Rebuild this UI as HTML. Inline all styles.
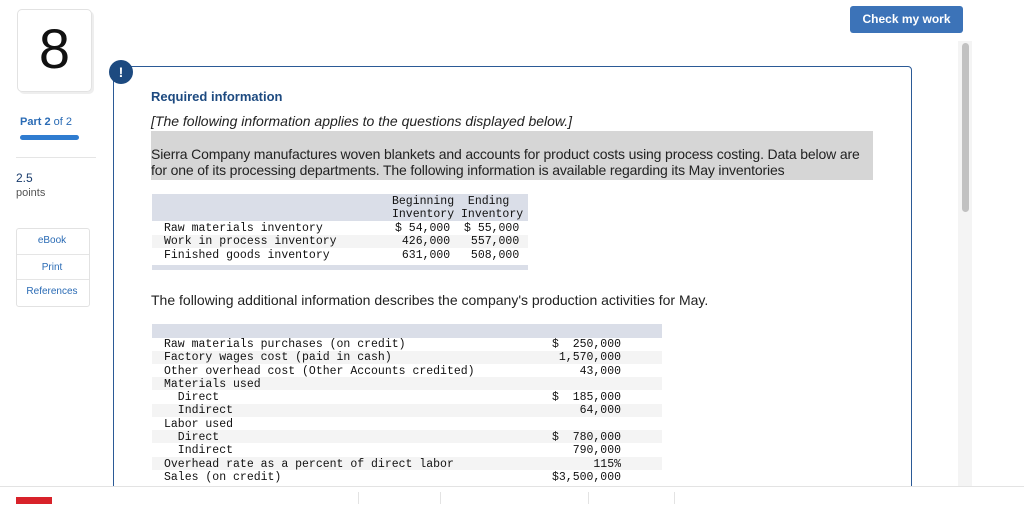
<!DOCTYPE html>
<html><head><style>
body{margin:0;width:1024px;height:504px;background:#fff;position:relative;overflow:hidden;font-family:"Liberation Sans",sans-serif;color:#222}
.a{position:absolute}
.mono{font-family:"Liberation Mono",monospace;font-size:11.5px;white-space:pre;line-height:13.3px;color:#111}
.side{color:#2a6bb5;font-size:10px;text-align:center;width:72px;left:16px}
</style></head><body>
<div class="a" style="left:17px;top:9px;width:73px;height:81px;border:1px solid #e2e2e2;border-radius:5px;box-shadow:2px 2px 0 #eee"></div>
<div class="a" style="left:17px;top:14px;width:75px;text-align:center;font-size:56px;line-height:70px;color:#111">8</div>
<div class="a" style="left:20px;top:116px;font-size:11px;color:#2a6bb5"><b>Part 2</b> of 2</div>
<div class="a" style="left:20px;top:135px;width:59px;height:5px;border-radius:3px;background:#2f7cd0"></div>
<div class="a" style="left:16px;top:157px;width:80px;height:1px;background:#e5e5e5"></div>
<div class="a" style="left:16px;top:171px;font-size:12px;color:#1a3d6d">2.5</div>
<div class="a" style="left:16px;top:187px;font-size:11px;color:#555">points</div>
<div class="a" style="left:16px;top:228px;width:72px;height:77px;border:1px solid #e2e2e2;border-radius:3px"></div>
<div class="a" style="left:17px;top:254px;width:72px;height:1px;background:#e5e5e5"></div>
<div class="a" style="left:17px;top:279px;width:72px;height:1px;background:#e5e5e5"></div>
<div class="a side" style="top:235px">eBook</div>
<div class="a side" style="top:262px">Print</div>
<div class="a side" style="top:286px">References</div>

<div class="a" style="left:850px;top:6px;width:113px;height:27px;background:#3c73b8;border-radius:3px;color:#fff;font-weight:bold;font-size:12px;line-height:27px;text-align:center">Check my work</div>
<div class="a" style="left:958px;top:41px;width:14px;height:446px;background:#f4f4f4"></div>
<div class="a" style="left:962px;top:43px;width:7px;height:169px;background:#c1c1c1;border-radius:4px"></div>

<div class="a" style="left:113px;top:66px;width:797px;height:430px;border:1px solid #2b5a96;border-radius:4px"></div>
<div class="a" style="left:109px;top:60px;width:24px;height:24px;border-radius:50%;background:#1d4a80;color:#fff;font-weight:bold;font-size:14px;text-align:center;line-height:24px">!</div>
<div class="a" style="left:151px;top:89px;font-weight:bold;font-size:13px;color:#1d4a80">Required information</div>
<div class="a" style="left:151px;top:113px;font-style:italic;font-size:14px">[The following information applies to the questions displayed below.]</div>
<div class="a" style="left:151px;top:131px;width:722px;height:49px;background:#d6d6d6"></div>
<div class="a" style="left:151px;top:146px;width:722px;font-size:14px;line-height:16px;letter-spacing:-0.15px">Sierra Company manufactures woven blankets and accounts for product costs using process costing. Data below are<br>for one of its processing departments. The following information is available regarding its May inventories</div>

<div class="a" style="left:152px;top:194px;width:376px;height:27px;background:#dadee8"></div>
<div class="a" style="left:152px;top:235px;width:376px;height:13px;background:#f4f4f4"></div>
<div class="a" style="left:152px;top:265px;width:376px;height:5px;background:#dadee8"></div>
<div class="a mono" style="left:392px;top:195px">Beginning  Ending
Inventory Inventory</div>
<div class="a mono" style="left:164px;top:222px">Raw materials inventory
Work in process inventory
Finished goods inventory</div>
<div class="a mono" style="left:395px;top:222px">$ 54,000  $ 55,000
 426,000   557,000
 631,000   508,000</div>

<div class="a" style="left:151px;top:292px;font-size:14px">The following additional information describes the company's production activities for May.</div>

<div class="a" style="left:152px;top:324px;width:510px;height:14px;background:#dadee8"></div>
<div class="a" style="left:152px;top:351px;width:510px;height:13px;background:#f4f4f4"></div>
<div class="a" style="left:152px;top:377px;width:510px;height:13px;background:#f4f4f4"></div>
<div class="a" style="left:152px;top:404px;width:510px;height:13px;background:#f4f4f4"></div>
<div class="a" style="left:152px;top:430px;width:510px;height:13px;background:#f4f4f4"></div>
<div class="a" style="left:152px;top:457px;width:510px;height:13px;background:#f4f4f4"></div>
<div class="a mono" style="left:164px;top:338px">Raw materials purchases (on credit)
Factory wages cost (paid in cash)
Other overhead cost (Other Accounts credited)
Materials used
  Direct
  Indirect
Labor used
  Direct
  Indirect
Overhead rate as a percent of direct labor
Sales (on credit)</div>
<div class="a mono" style="left:552px;top:338px;text-align:right">$  250,000
 1,570,000
    43,000

$  185,000
    64,000

$  780,000
   790,000
      115%
$3,500,000</div>

<div class="a" style="left:0;top:486px;width:1024px;height:18px;background:#fff;border-top:1px solid #e3e3e3"></div>
<div class="a" style="left:358px;top:492px;width:1px;height:12px;background:#e3e3e3"></div>
<div class="a" style="left:440px;top:492px;width:1px;height:12px;background:#e3e3e3"></div>
<div class="a" style="left:588px;top:492px;width:1px;height:12px;background:#e3e3e3"></div>
<div class="a" style="left:674px;top:492px;width:1px;height:12px;background:#e3e3e3"></div>
<div class="a" style="left:16px;top:497px;width:36px;height:7px;background:#d8222a"></div>
</body></html>
